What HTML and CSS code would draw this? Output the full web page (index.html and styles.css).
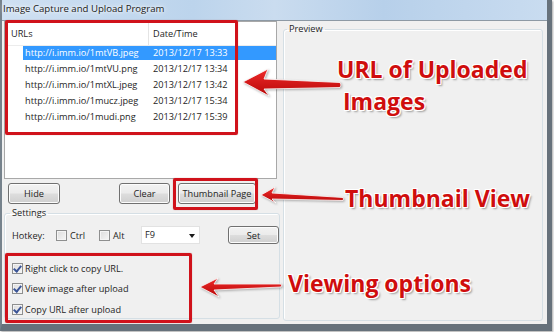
FILE: index.html
```html
<!DOCTYPE html>
<html lang="en">
<head>
    <meta charset="UTF-8">
    <meta name="viewport" content="width=device-width, initial-scale=1.0">
    <title>Image Capture and Upload Program</title>
    <link rel="stylesheet" href="styles.css">
</head>
<body>
    <div class="window">
        <div class="titlebar">Image Capture and Upload Program</div>

        <div class="client">
            <div class="left-col">
                <!-- List of uploaded URLs -->
                <div class="listview">
                    <div class="lv-head">
                        <span class="hd-url">URLs</span>
                        <span class="hd-date">Date/Time</span>
                    </div>
                    <div class="lv-row selected"><span class="c-url">http://i.imm.io/1mtVB.jpeg</span><span class="c-date">2013/12/17 13:33</span></div>
                    <div class="lv-row"><span class="c-url">http://i.imm.io/1mtVU.png</span><span class="c-date">2013/12/17 13:34</span></div>
                    <div class="lv-row"><span class="c-url">http://i.imm.io/1mtXL.jpeg</span><span class="c-date">2013/12/17 13:42</span></div>
                    <div class="lv-row"><span class="c-url">http://i.imm.io/1mucz.jpeg</span><span class="c-date">2013/12/17 15:34</span></div>
                    <div class="lv-row"><span class="c-url">http://i.imm.io/1mudi.png</span><span class="c-date">2013/12/17 15:39</span></div>
                </div>

                <div class="button-row">
                    <button class="btn btn-hide">Hide</button>
                    <button class="btn btn-clear">Clear</button>
                    <button class="btn btn-thumb">Thumbnail Page</button>
                </div>

                <fieldset class="group settings">
                    <legend>Settings</legend>
                    <div class="hotkey-row">
                        <span class="hk-label">Hotkey:</span>
                        <span class="check"></span><span class="check-text">Ctrl</span>
                        <span class="check alt"></span><span class="check-text">Alt</span>
                        <span class="combo">F9<span class="combo-arrow"></span></span>
                        <button class="btn btn-set">Set</button>
                    </div>
                    <div class="option-row"><span class="check checked"></span><span class="check-text">Right click to copy URL.</span></div>
                    <div class="option-row"><span class="check checked"></span><span class="check-text">View image after upload</span></div>
                    <div class="option-row"><span class="check checked"></span><span class="check-text">Copy URL after upload</span></div>
                </fieldset>
            </div>

            <fieldset class="group preview">
                <legend>Preview</legend>
            </fieldset>
        </div>
    </div>

    <!-- Annotations drawn over the screenshot -->
    <div class="mark mark-list"></div>
    <div class="mark mark-thumb"></div>
    <div class="mark mark-options"></div>

    <svg class="arrows" width="554" height="332" viewBox="0 0 554 332">
        <defs>
            <linearGradient id="red" x1="0" y1="0" x2="0" y2="1">
                <stop offset="0" stop-color="#ee2a2a"/>
                <stop offset="1" stop-color="#b80808"/>
            </linearGradient>
        </defs>
        <path d="M243,82 L268,69 L264,79 L340,82.5 Q342,85 340,87.5 L264,89 L269,96 Z" fill="url(#red)" stroke="#fff" stroke-width="0.8"/>
        <path d="M261,195 L275,187 L272,193 L343,197.5 Q344,199 343,200.5 L272,199 L276,203 Z" fill="url(#red)" stroke="#fff" stroke-width="0.8"/>
        <path d="M200,287 L218,278 L214,284 L281,284 Q282,285.5 281,287 L214,290 L219,297 Z" fill="url(#red)" stroke="#fff" stroke-width="0.8"/>
    </svg>

    <div class="callout callout-urls">URL of Uploaded<br>&nbsp;Images</div>
    <div class="callout callout-thumb">Thumbnail View</div>
    <div class="callout callout-options">Viewing options</div>
</body>
</html>
```

FILE: styles.css
```css
/* Page */
body {
    margin: 0;
    background: #ffffff;
    font-family: 'Open Sans', 'Noto Sans', sans-serif;
    font-size: 9.2px;
    color: #1e1e1e;
    position: relative;
    width: 554px;
    height: 332px;
    overflow: hidden;
}

/* Window frame */
.window {
    width: 552px;
    height: 331px;
    box-sizing: border-box;
    border-left: 2px solid #76828c;
    border-right: 5px solid #66717b;
    border-bottom: 7px solid #66717b;
    box-shadow: 1px 1px 2px rgba(0, 0, 0, 0.35);
    display: flex;
    flex-direction: column;
}

.titlebar {
    height: 20px;
    line-height: 18px;
    padding-left: 1px;
    font-size: 9.6px;
    color: #1a1a1a;
    text-shadow: 0 0 6px #fff, 0 0 3px #fff;
    background: linear-gradient(to right, #cfe0f2 0%, #bcd4ec 35%, #cadcef 50%, #b7d0ea 70%, #c9dcf0 100%);
}

.client {
    flex: 1;
    display: flex;
    background: #f0f0f0;
    border-top: 1px solid #8d99a4;
    padding: 0 4px 0 2px;
}

/* Left column */
.left-col {
    width: 273px;
    display: flex;
    flex-direction: column;
}

.listview {
    height: 158px;
    box-sizing: border-box;
    background: #fff;
    border: 1px solid #a8a8a8;
}

.lv-head {
    height: 23px;
    display: flex;
    align-items: center;
    border-bottom: 1px solid #ececec;
}

.hd-url {
    width: 137px;
    padding-left: 6px;
    line-height: 23px;
    border-right: 1px solid #e4e4e4;
}

.hd-date {
    padding-left: 4px;
}

.lv-row {
    height: 16px;
    line-height: 14px;
    margin-left: 18px;
    display: flex;
}

.lv-row.selected {
    height: 14px;
    margin-bottom: 2px;
    background: #3399ff;
    color: #fff;
}

.c-url {
    width: 128px;
    flex-shrink: 0;
    padding-left: 2px;
}

/* Buttons */
.button-row {
    display: flex;
    margin-top: 4px;
    height: 21px;
}

.btn {
    font-family: inherit;
    font-size: 9.2px;
    color: #1e1e1e;
    height: 21px;
    padding: 0;
    border: 1px solid #707070;
    border-radius: 3px;
    background: linear-gradient(to bottom, #f2f2f2 0%, #ebebeb 48%, #dddddd 52%, #cfcfcf 100%);
    box-shadow: inset 0 0 0 1px #fcfcfc;
}

.btn-hide { margin-left: 4px; width: 52px; }
.btn-clear { margin-left: 59px; width: 51px; }
.btn-thumb { margin-left: 8px; width: 78px; }

/* Group boxes */
.group {
    margin: 0;
    border: 1px solid #d5dfe5;
    border-radius: 3px;
    box-shadow: inset 1px 1px 0 #fff;
}

.group legend {
    padding: 0 2px;
    line-height: 14px;
    margin-left: -2px;
}

.settings {
    margin-top: 2px;
    height: 113px;
    box-sizing: border-box;
    padding: 0 0 0 7px;
}

.hotkey-row {
    margin-top: 5px;
    height: 20px;
    display: flex;
    align-items: center;
}

.hk-label {
    width: 44px;
}

.check {
    width: 11px;
    height: 11px;
    flex-shrink: 0;
    box-sizing: border-box;
    border: 1px solid #8e8f8f;
    background: linear-gradient(135deg, #dcdcdc 0%, #f6f6f6 100%);
    box-shadow: inset 0 0 0 1px #f4f4f4;
    margin-right: 3px;
    position: relative;
}

.check.checked::after {
    content: "";
    position: absolute;
    left: 2px;
    top: 0px;
    width: 3px;
    height: 6px;
    border-right: 2px solid #3b5597;
    border-bottom: 2px solid #3b5597;
    transform: rotate(40deg);
}

.hotkey-row .check-text {
    width: 29px;
}

.combo {
    width: 59px;
    height: 18px;
    box-sizing: border-box;
    background: #fff;
    border: 1px solid #e2e2e2;
    padding-left: 3px;
    line-height: 16px;
    margin-left: -1px;
    position: relative;
}

.combo-arrow {
    position: absolute;
    right: 4px;
    top: 7px;
    border-left: 3.5px solid transparent;
    border-right: 3.5px solid transparent;
    border-top: 4px solid #1a1a1a;
}

.btn-set {
    margin-left: 28px;
    width: 51px;
    height: 18px;
}

.option-row {
    height: 20.5px;
    display: flex;
    align-items: center;
}

.hotkey-row + .option-row {
    margin-top: 13px;
}

.option-row .check {
    margin-right: 2px;
}

.preview {
    flex: 1;
    margin: 1px 0 0 6px;
    height: 299px;
    box-sizing: border-box;
    padding: 0 5px;
}

/* Annotations */
.mark {
    position: absolute;
    border: 3px solid #d0121b;
    border-radius: 2px;
    box-shadow: 0 0 1px rgba(120, 0, 0, 0.5);
}

.mark-list { left: 5px; top: 20px; width: 227px; height: 109px; }
.mark-thumb { left: 173px; top: 178px; width: 79px; height: 26px; }
.mark-options { left: 5px; top: 253px; width: 181px; height: 64px; }

.arrows {
    position: absolute;
    left: 0;
    top: 0;
    filter: drop-shadow(1px 1px 1px rgba(0, 0, 0, 0.3));
}

.callout {
    position: absolute;
    font-family: 'Open Sans', 'Noto Sans', sans-serif;
    font-weight: 700;
    font-size: 23px;
    line-height: 28.5px;
    color: #cf0d0d;
    white-space: nowrap;
    text-shadow:
        1px 0 0 #fff, -1px 0 0 #fff, 0 1px 0 #fff, 0 -1px 0 #fff,
        1px 1px 0 #fff, -1px -1px 0 #fff, 1px -1px 0 #fff, -1px 1px 0 #fff,
        2px 2px 2px rgba(0, 0, 0, 0.35);
}

.callout-urls { left: 337px; top: 54px; line-height: 31.5px; }
.callout-thumb { left: 345px; top: 184px; }
.callout-options { left: 288px; top: 269px; }
```
